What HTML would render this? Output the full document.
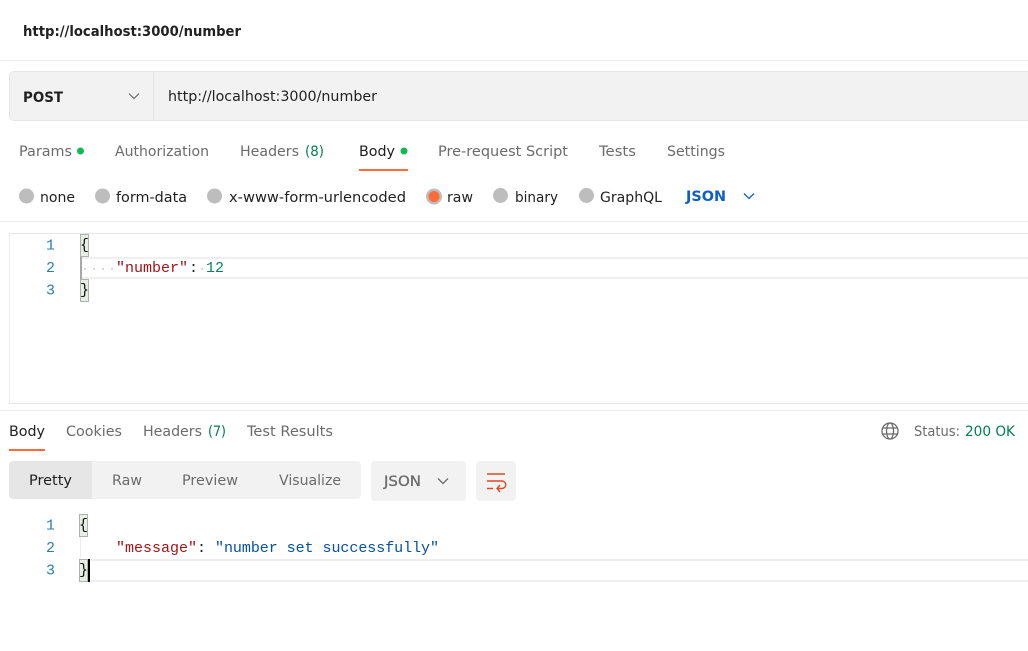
<!DOCTYPE html>
<html><head><meta charset="utf-8"><style>
html,body{margin:0;padding:0;background:#fff;width:1028px;height:651px;overflow:hidden}
svg{display:block}
text{font-family:"DejaVu Sans","Liberation Sans",sans-serif;font-size:14.6px;fill:#212121;white-space:pre}
.g{fill:#6b6b6b}
.m{font-family:"Liberation Mono",monospace;font-size:15px}
.b{font-weight:bold}
</style></head><body>
<svg width="1028" height="651" viewBox="0 0 1028 651" xmlns="http://www.w3.org/2000/svg">
<rect x="0" y="60" width="1028" height="1" fill="#ededed"/>
<text x="23" y="36" class="b" textLength="218" lengthAdjust="spacingAndGlyphs">http://localhost:3000/number</text>

<rect x="9.5" y="71.5" width="1030" height="49" rx="4" fill="#f2f2f2" stroke="#e6e6e6"/>
<rect x="153" y="72" width="1" height="48" fill="#e6e6e6"/>
<text x="23" y="102" class="b" textLength="40" lengthAdjust="spacingAndGlyphs">POST</text>
<path d="M129 93.5l5 5 5-5" fill="none" stroke="#6b6b6b" stroke-width="1.2"/>
<text x="168" y="101" textLength="209" lengthAdjust="spacingAndGlyphs">http://localhost:3000/number</text>

<text x="19" y="156" class="g" textLength="53" lengthAdjust="spacingAndGlyphs">Params</text>
<circle cx="80.5" cy="151" r="3.5" fill="#0cbb52"/>
<text x="115" y="156" class="g" textLength="94" lengthAdjust="spacingAndGlyphs">Authorization</text>
<text x="240" y="156" class="g" textLength="59" lengthAdjust="spacingAndGlyphs">Headers</text>
<text x="305" y="156" style="fill:#007f4f" textLength="19" lengthAdjust="spacingAndGlyphs">(8)</text>
<text x="359" y="156" textLength="36" lengthAdjust="spacingAndGlyphs">Body</text>
<circle cx="404" cy="151" r="3.5" fill="#0cbb52"/>
<rect x="359" y="169" width="49" height="2" fill="#ff6c37"/>
<text x="438" y="156" class="g" textLength="130" lengthAdjust="spacingAndGlyphs">Pre-request Script</text>
<text x="599" y="156" class="g" textLength="37" lengthAdjust="spacingAndGlyphs">Tests</text>
<text x="667" y="156" class="g" textLength="58" lengthAdjust="spacingAndGlyphs">Settings</text>

<circle cx="26.5" cy="196" r="7.5" fill="#bdbdbd"/>
<text x="40" y="202" textLength="35" lengthAdjust="spacingAndGlyphs">none</text>
<circle cx="102.5" cy="196" r="7.5" fill="#bdbdbd"/>
<text x="116" y="202" textLength="71" lengthAdjust="spacingAndGlyphs">form-data</text>
<circle cx="214.5" cy="196" r="7.5" fill="#bdbdbd"/>
<text x="229" y="202" textLength="177" lengthAdjust="spacingAndGlyphs">x-www-form-urlencoded</text>
<circle cx="434" cy="196.5" r="8" fill="#bdbdbd"/>
<circle cx="434" cy="196.5" r="5.5" fill="#ff6c37"/>
<text x="447" y="202" textLength="26" lengthAdjust="spacingAndGlyphs">raw</text>
<circle cx="500.5" cy="195.5" r="7.5" fill="#bdbdbd"/>
<text x="515" y="202" textLength="43" lengthAdjust="spacingAndGlyphs">binary</text>
<circle cx="586.5" cy="195.5" r="7.5" fill="#bdbdbd"/>
<text x="600" y="202" textLength="62" lengthAdjust="spacingAndGlyphs">GraphQL</text>
<text x="686" y="201" class="b" style="fill:#0f5fc4" textLength="40" lengthAdjust="spacingAndGlyphs">JSON</text>
<path d="M744 193.5l5 5 5-5" fill="none" stroke="#0f5fc4" stroke-width="1.3"/>
<rect x="0" y="221" width="1028" height="1" fill="#ededed"/>

<rect x="9" y="233" width="1019" height="1" fill="#e6e6e6"/>
<rect x="9" y="233" width="1" height="171" fill="#ededed"/>
<rect x="9" y="403" width="1019" height="1" fill="#e6e6e6"/>
<rect x="81" y="257" width="947" height="2" fill="#efefef"/>
<rect x="81" y="277" width="947" height="2" fill="#efefef"/>
<rect x="80" y="257" width="2" height="22" fill="#a8a8a8"/>
<text x="46" y="249.5" class="m" style="fill:#2a7fa8">1</text>
<text x="46" y="272" class="m" style="fill:#2a7fa8">2</text>
<text x="46" y="294.5" class="m" style="fill:#2a7fa8">3</text>
<rect x="80.5" y="234.5" width="8" height="22" fill="#e8eee5" stroke="#b0b0b0"/>
<rect x="80.5" y="279.5" width="8" height="22" fill="#e8eee5" stroke="#b0b0b0"/>
<text x="80" y="249" class="m" style="fill:#111">{</text>
<text x="80" y="294" class="m" style="fill:#111">}</text>
<g fill="#d8d8d8"><rect x="84" y="268" width="2" height="2"/><rect x="93" y="268" width="2" height="2"/><rect x="102" y="268" width="2" height="2"/><rect x="111" y="268" width="2" height="2"/><rect x="201" y="268" width="2" height="2"/></g>
<text x="116" y="272" class="m" style="fill:#a31515">"number"</text>
<text x="189" y="272" class="m" style="fill:#212121">:</text>
<text x="206" y="272" class="m" style="fill:#098658">12</text>

<rect x="0" y="410" width="1028" height="1" fill="#ededed"/>
<text x="9" y="436" textLength="36" lengthAdjust="spacingAndGlyphs">Body</text>
<rect x="9" y="449" width="36" height="2" fill="#ff6c37"/>
<text x="66" y="436" class="g" textLength="56" lengthAdjust="spacingAndGlyphs">Cookies</text>
<text x="143" y="436" class="g" textLength="59" lengthAdjust="spacingAndGlyphs">Headers</text>
<text x="208" y="436" style="fill:#007f4f" textLength="18" lengthAdjust="spacingAndGlyphs">(7)</text>
<text x="247" y="436" class="g" textLength="86" lengthAdjust="spacingAndGlyphs">Test Results</text>
<g fill="none" stroke="#6b6b6b" stroke-width="1.3"><circle cx="890" cy="431" r="8"/><ellipse cx="890" cy="431" rx="3.5" ry="8"/><path d="M883 428h14M883 434h14"/></g>
<text x="914" y="436" class="g" textLength="46" lengthAdjust="spacingAndGlyphs">Status:</text>
<text x="965" y="436" style="fill:#007f4f" textLength="50" lengthAdjust="spacingAndGlyphs">200 OK</text>

<rect x="9" y="461" width="352" height="38" rx="4" fill="#f2f2f2"/>
<path d="M13 461H92V499H13a4 4 0 0 1-4-4V465a4 4 0 0 1 4-4z" fill="#e6e6e6"/>
<text x="29" y="485" textLength="43" lengthAdjust="spacingAndGlyphs">Pretty</text>
<text x="112" y="485" class="g" textLength="30" lengthAdjust="spacingAndGlyphs">Raw</text>
<text x="182" y="485" class="g" textLength="56" lengthAdjust="spacingAndGlyphs">Preview</text>
<text x="279" y="485" class="g" textLength="62" lengthAdjust="spacingAndGlyphs">Visualize</text>

<rect x="371" y="461" width="95" height="40" rx="4" fill="#f2f2f2"/>
<text x="384" y="486" class="g" textLength="37" lengthAdjust="spacingAndGlyphs" style="stroke:#6b6b6b;stroke-width:.3">JSON</text>
<path d="M438 478.5l5 5 5-5" fill="none" stroke="#6b6b6b" stroke-width="1.3"/>
<rect x="476" y="461" width="40" height="40" rx="4" fill="#f2f2f2"/>
<path d="M487 474h18M487 481h15a3.5 3.5 0 0 1 0 7.5H497M500 485l-3 3.5 3 3.5M487 488.5h6" fill="none" stroke="#e0491f" stroke-width="1.4"/>

<rect x="88" y="559" width="940" height="2" fill="#efefef"/>
<rect x="88" y="580" width="940" height="2" fill="#efefef"/>
<rect x="80" y="537" width="1" height="21" fill="#ededed"/>
<text x="46" y="529.5" class="m" style="fill:#2a7fa8">1</text>
<text x="46" y="552" class="m" style="fill:#2a7fa8">2</text>
<text x="46" y="574.5" class="m" style="fill:#2a7fa8">3</text>
<rect x="79.5" y="514.5" width="8" height="22" fill="#e8eee5" stroke="#b0b0b0"/>
<rect x="79.5" y="559.5" width="8" height="22" fill="#e8eee5" stroke="#b0b0b0"/>
<text x="79" y="529" class="m" style="fill:#111">{</text>
<text x="79" y="574" class="m" style="fill:#111">}</text>
<rect x="88" y="559" width="2" height="23" fill="#000"/>
<text x="116" y="552" class="m" style="fill:#a31515">"message"</text>
<text x="197" y="552" class="m" style="fill:#212121">:</text>
<text x="215" y="552" class="m" style="fill:#0451a5" textLength="224">"number set successfully"</text>
</svg>
</body></html>
